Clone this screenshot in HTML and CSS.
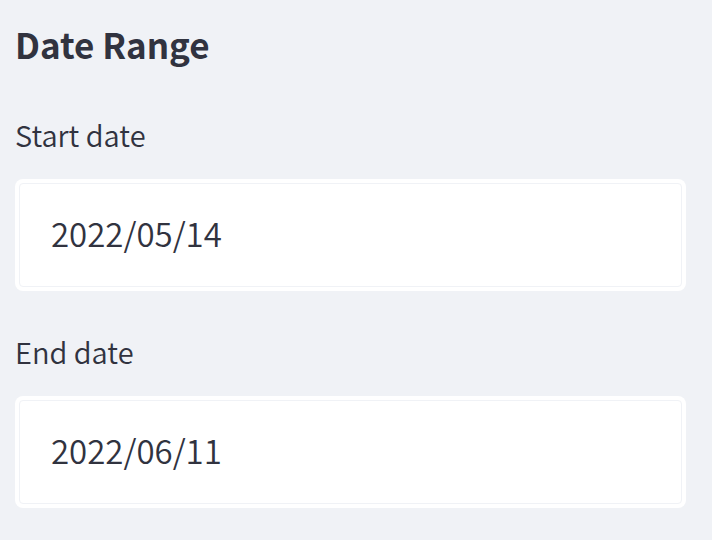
FILE: index.html
```html
<!DOCTYPE html>
<html lang="en">
<head>
<meta charset="utf-8">
<title>Date Range</title>
<link rel="stylesheet" href="styles.css">
</head>
<body>
<form class="date-range">
  <h2 class="title">Date Range</h2>
  <div class="field">
    <label class="label" for="start">Start date</label>
    <div class="control"><input class="input" id="start" type="text" value="2022/05/14"></div>
  </div>
  <div class="field">
    <label class="label" for="end">End date</label>
    <div class="control"><input class="input" id="end" type="text" value="2022/06/11"></div>
  </div>
</form>
</body>
</html>
```

FILE: styles.css
```css
* {
  box-sizing: border-box;
}

body {
  margin: 0;
  background: #f0f2f6;
  color: #31333f;
  font-family: "Noto Sans CJK SC", "Noto Sans", sans-serif;
  font-weight: 350;
}

.date-range {
  display: flex;
  flex-direction: column;
  gap: 36px;
  padding: 18px 26px 32px 15px;
}

.title {
  margin: 0 0 4px;
  font-size: 35px;
  font-weight: 700;
  line-height: 52px;
}

.label {
  display: block;
  margin-bottom: 21px;
  font-size: 29px;
  line-height: 48px;
}

.control {
  padding: 4px;
  border-radius: 8px;
  background: #fff;
}

.input {
  display: block;
  width: 100%;
  height: 104px;
  padding: 0 31px 4px;
  border: 1px solid #f0f2f6;
  border-radius: 4px;
  outline: 0;
  background: #fff;
  color: inherit;
  font-family: inherit;
  font-size: 33px;
  font-weight: inherit;
  line-height: 48px;
}
```
